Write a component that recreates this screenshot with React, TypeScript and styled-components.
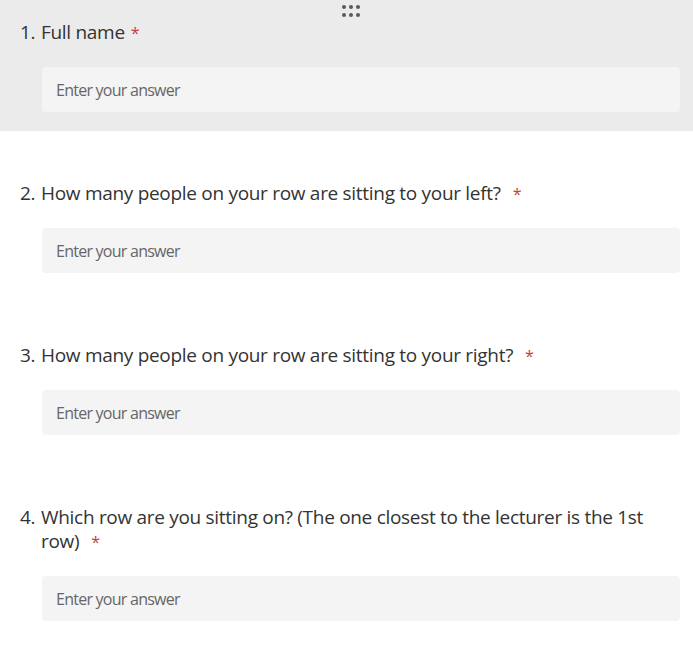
import React from "react";
import styled, { createGlobalStyle } from "styled-components";

const Global = createGlobalStyle`
  html, body { margin: 0; padding: 0; background: #ffffff; }
  body { font-family: "Open Sans", "Noto Sans", sans-serif; }
  * { box-sizing: border-box; }
`;

const Page = styled.div`
  width: 693px;
  display: flex;
  flex-direction: column;
`;

const Section = styled.section<{ $active?: boolean }>`
  position: relative;
  background: ${(p) => (p.$active ? "#ebebeb" : "#ffffff")};
  padding: ${(p) => (p.$active ? "20px 13px 19px 20px" : "50px 13px 20px 20px")};
  display: flex;
  flex-direction: column;
`;

const Handle = styled.div`
  position: absolute;
  top: 5px;
  left: 342px;
  display: grid;
  grid-template-columns: repeat(3, 4px);
  gap: 4px 3px;
`;

const Dot = styled.span`
  width: 4px;
  height: 4px;
  border-radius: 50%;
  background: #5a5a5a;
`;

const Title = styled.div`
  display: flex;
  font-size: 19px;
  line-height: 24px;
  color: #333333;
  letter-spacing: -0.3px;
`;

const Num = styled.span`
  flex: none;
  width: 21px;
`;

const Text = styled.span`
  flex: 1;
  padding-right: 20px;
`;

const Star = styled.span<{ $tight?: boolean }>`
  color: #c43e3e;
  font-size: 16px;
  line-height: 1;
  margin-left: ${(p) => (p.$tight ? "6px" : "12px")};
`;

const Input = styled.input`
  margin: 23px 0 0 22px;
  height: 45px;
  border: none;
  border-radius: 4px;
  background: #f4f4f4;
  padding: 0 14px;
  font-family: "Open Sans", "Noto Sans", sans-serif;
  font-size: 16px;
  letter-spacing: -0.75px;
  color: #333;
  outline: none;
  &::placeholder { color: #666666; }
`;

const questions = [
  { n: "1.", t: "Full name" },
  { n: "2.", t: "How many people on your row are sitting to your left?" },
  { n: "3.", t: "How many people on your row are sitting to your right?" },
  { n: "4.", t: "Which row are you sitting on? (The one closest to the lecturer is the 1st row)" },
];

export default function App() {
  return (
    <Page>
      <Global />
      {questions.map((q, i) => (
        <Section key={i} $active={i === 0}>
          {i === 0 && (
            <Handle>
              {Array.from({ length: 6 }).map((_, k) => (
                <Dot key={k} />
              ))}
            </Handle>
          )}
          <Title>
            <Num>{q.n}</Num>
            <Text>
              {q.t}
              <Star $tight={i === 0}>*</Star>
            </Text>
          </Title>
          <Input placeholder="Enter your answer" />
        </Section>
      ))}
    </Page>
  );
}
